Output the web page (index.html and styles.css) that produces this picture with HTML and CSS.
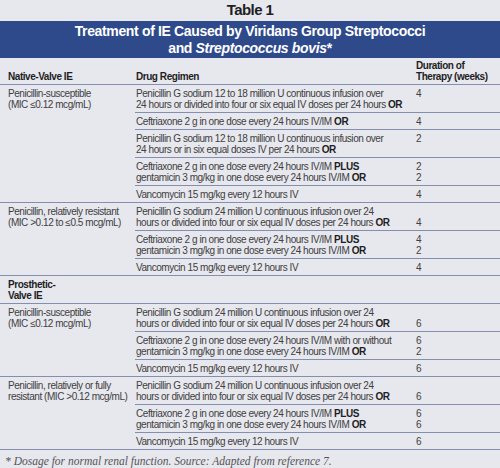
FILE: index.html
```html
<!DOCTYPE html>
<html lang="en">
<head>
    <meta charset="UTF-8">
    <title>Table 1</title>
    <link rel="stylesheet" href="styles.css">
</head>
<body>
    <!-- table caption -->
    <div class="table-no">Table 1</div>
    <div class="banner">
        Treatment of IE Caused by Viridans Group Streptococci<br>
        and <i>Streptococcus bovis</i>*
    </div>

    <table class="regimen">
        <colgroup>
            <col class="c-cond">
            <col class="c-drug">
            <col class="c-dur">
        </colgroup>
        <thead>
            <tr>
                <th class="cond">Native-Valve IE</th>
                <th class="drug">Drug Regimen</th>
                <th class="dur">Duration of<br>Therapy (weeks)</th>
            </tr>
        </thead>
        <tbody>
            <!-- native valve, susceptible -->
            <tr>
                <td class="cond" rowspan="5">Penicillin-susceptible<br>(MIC ≤0.12 mcg/mL)</td>
                <td class="drug">Penicillin G sodium 12 to 18 million U continuous infusion over<br>24 hours or divided into four or six equal IV doses per 24 hours <b>OR</b></td>
                <td class="dur">4</td>
            </tr>
            <tr>
                <td class="drug">Ceftriaxone 2 g in one dose every 24 hours IV/IM <b>OR</b></td>
                <td class="dur">4</td>
            </tr>
            <tr>
                <td class="drug">Penicillin G sodium 12 to 18 million U continuous infusion over<br>24 hours or in six equal doses IV per 24 hours <b>OR</b></td>
                <td class="dur">2</td>
            </tr>
            <tr>
                <td class="drug">Ceftriaxone 2 g in one dose every 24 hours IV/IM <b>PLUS</b><br>gentamicin 3 mg/kg in one dose every 24 hours IV/IM <b>OR</b></td>
                <td class="dur">2<br>2</td>
            </tr>
            <tr>
                <td class="drug">Vancomycin 15 mg/kg every 12 hours IV</td>
                <td class="dur">4</td>
            </tr>

            <!-- native valve, relatively resistant -->
            <tr>
                <td class="cond" rowspan="3">Penicillin, relatively resistant<br>(MIC &gt;0.12 to ≤0.5 mcg/mL)</td>
                <td class="drug">Penicillin G sodium 24 million U continuous infusion over 24<br>hours or divided into four or six equal IV doses per 24 hours <b>OR</b></td>
                <td class="dur low">4</td>
            </tr>
            <tr>
                <td class="drug">Ceftriaxone 2 g in one dose every 24 hours IV/IM <b>PLUS</b><br>gentamicin 3 mg/kg in one dose every 24 hours IV/IM <b>OR</b></td>
                <td class="dur">4<br>2</td>
            </tr>
            <tr>
                <td class="drug">Vancomycin 15 mg/kg every 12 hours IV</td>
                <td class="dur">4</td>
            </tr>

            <!-- prosthetic valve -->
            <tr>
                <th class="cond">Prosthetic-<br>Valve IE</th>
                <td class="blank"></td>
                <td class="blank"></td>
            </tr>
            <tr>
                <td class="cond" rowspan="3">Penicillin-susceptible<br>(MIC ≤0.12 mcg/mL)</td>
                <td class="drug">Penicillin G sodium 24 million U continuous infusion over 24<br>hours or divided into four or six equal IV doses per 24 hours <b>OR</b></td>
                <td class="dur low">6</td>
            </tr>
            <tr>
                <td class="drug">Ceftriaxone 2 g in one dose every 24 hours IV/IM with or without<br>gentamicin 3 mg/kg in one dose every 24 hours IV/IM <b>OR</b></td>
                <td class="dur">6<br>2</td>
            </tr>
            <tr>
                <td class="drug">Vancomycin 15 mg/kg every 12 hours IV</td>
                <td class="dur">6</td>
            </tr>
            <tr>
                <td class="cond" rowspan="3">Penicillin, relatively or fully<br>resistant (MIC &gt;0.12 mcg/mL)</td>
                <td class="drug">Penicillin G sodium 24 million U continuous infusion over 24<br>hours or divided into four or six equal IV doses per 24 hours <b>OR</b></td>
                <td class="dur low">6</td>
            </tr>
            <tr>
                <td class="drug">Ceftriaxone 2 g in one dose every 24 hours IV/IM <b>PLUS</b><br>gentamicin 3 mg/kg in one dose every 24 hours IV/IM <b>OR</b></td>
                <td class="dur">6<br>6</td>
            </tr>
            <tr>
                <td class="drug">Vancomycin 15 mg/kg every 12 hours IV</td>
                <td class="dur">6</td>
            </tr>
        </tbody>
    </table>

    <!-- footnote -->
    <p class="note">* Dosage for normal renal function. Source: Adapted from reference 7.</p>
</body>
</html>
```

FILE: styles.css
```css
/* base */
body {
    margin: 0;
    width: 500px;
    height: 468px;
    overflow: hidden;
    background: #e7e7ee;
    color: #404040;
    font-family: "Liberation Sans", Arial, sans-serif;
}

/* caption */
.table-no {
    height: 21px;
    line-height: 20px;
    text-align: center;
    font-size: 15px;
    font-weight: bold;
    letter-spacing: -0.6px;
    color: #1e1e24;
}

.banner {
    background: #2f4a8b;
    color: #ffffff;
    text-align: center;
    font-size: 14px;
    font-weight: bold;
    line-height: 17px;
    letter-spacing: -0.35px;
    padding: 2px 0 1px;
}

/* table */
.regimen {
    width: 100%;
    border-collapse: collapse;
    table-layout: fixed;
    font-size: 10px;
    line-height: 11px;
    letter-spacing: -0.45px;
}

.c-cond { width: 135px; }
.c-drug { width: 275px; }
.c-dur  { width: 90px; }

.regimen th {
    text-align: left;
    font-weight: bold;
    color: #1e1e24;
    vertical-align: bottom;
    white-space: nowrap;
}

.regimen thead th {
    padding: 2px 0 2px;
    border-bottom: 1px solid #858eb1;
}

.regimen td,
.regimen tbody th {
    vertical-align: top;
    padding: 3px 0 2px;
    border-bottom: 1px solid #858eb1;
    white-space: nowrap;
}

.regimen b {
    color: #1e1e24;
}

.regimen .cond {
    padding-left: 8px;
}

.regimen .drug {
    padding-left: 1px;
}

.regimen .dur {
    padding-left: 6px;
}

.regimen tbody th.cond {
    vertical-align: top;
}

.regimen td.dur.low {
    vertical-align: bottom;
}

/* footnote */
.note {
    margin: 0;
    padding: 5px 0 0 5px;
    font-family: "Liberation Serif", serif;
    font-style: italic;
    font-size: 11.5px;
    color: #555555;
}
```
